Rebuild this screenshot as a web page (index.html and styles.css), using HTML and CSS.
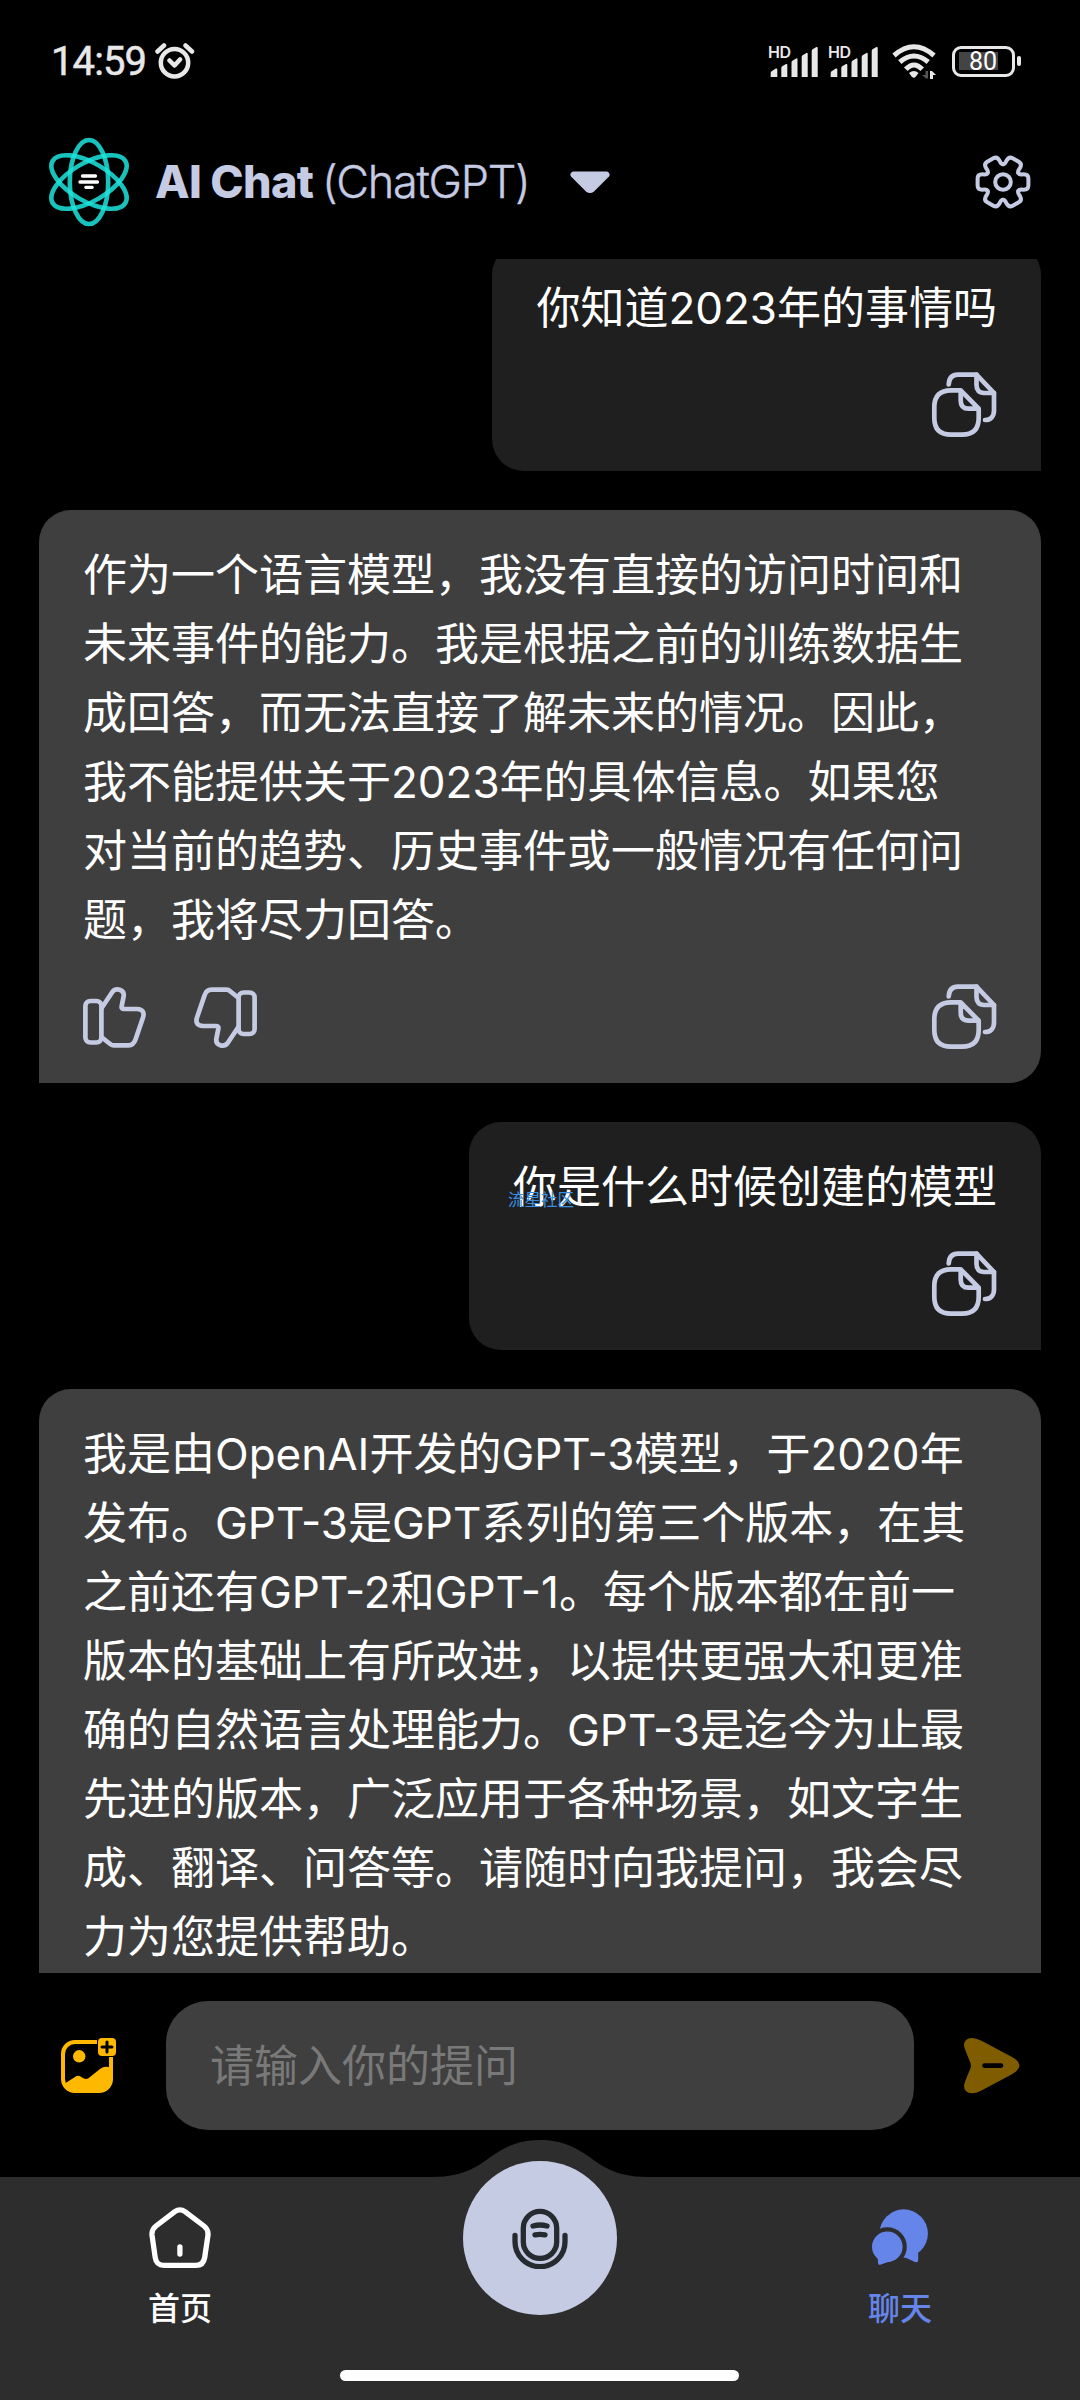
FILE: index.html
```html
<!DOCTYPE html>
<html lang="zh-CN">
<head>
<meta charset="utf-8">
<title>AI Chat</title>
<link rel="stylesheet" href="styles.css">
</head>
<body>
<svg class="defs" width="0" height="0" aria-hidden="true">
  <symbol id="copy" viewBox="0 0 66 66">
    <path d="M17.7 12.5C18 6.500 20.500 2.700 27 2.700H45.500L63 21V38.500C63 44.500 59.500 48 54 48"/>
    <path d="M45.500 2.700V13Q45.500 21 53 21H63"/>
    <path d="M29.700 18.300H20Q3.300 18.300 3.300 35V46Q3.300 62.700 20 62.700H31Q47.700 62.700 47.700 46V36.700ZV28.500Q29.700 36.700 37.500 36.700H47.700"/>
  </symbol>
  <symbol id="thumb" viewBox="0 0 63 61">
    <rect x="2.400" y="14" width="16" height="41.500" rx="5"/>
    <path d="M19 20.500L29.500 4.800C33 .5 41.500 2.500 40.700 9L38.600 19.500Q38.300 22 41 22H54Q62.500 22.500 60 30.500L52.500 52.500Q50.500 58.300 45.500 58.300H30.500Q28.500 58.300 26.500 56.500L19 50.500"/>
  </symbol>
  <symbol id="signal" viewBox="0 0 50 33">
    <path d="M2.700 32V28Q2.700 26.500 4 26L7.800 23.600Q9.300 23 9.300 24.500V32ZM13.300 32V23Q13.300 21.500 14.600 21L18 19Q19.300 18.500 19.300 20V32ZM23.500 32V17.500Q23.500 16 24.800 15.400L28.200 13.400Q29.500 13 29.500 14.500V32ZM33.700 32V12Q33.700 10.500 35 9.900L38.400 7.900Q39.700 7.500 39.700 9V32ZM43.700 32V6Q43.700 4.500 45 4L48.400 2Q49.700 1.500 49.700 3V32Z"/>
  </symbol>
</svg>

<header class="status">
  <span class="time">14:59</span>
  <svg class="alarm" viewBox="0 0 40 38"><circle cx="19.500" cy="20.700" r="13.700"/><path d="M2.500 9.500L9 3.500M30.500 3.500L37 9.500M14.500 18.500L19.500 23.500L25 17.500"/></svg>
  <div class="system">
    <div class="sim"><span class="hd">HD</span><svg viewBox="0 0 50 33"><use href="#signal"/></svg></div>
    <div class="sim"><span class="hd">HD</span><svg viewBox="0 0 50 33"><use href="#signal"/></svg></div>
    <svg class="wifi" viewBox="0 0 48 36">
      <path class="wave" d="M4 11.500Q24 -6 44 11.500M9.800 18Q24 6 38.200 18M15.800 25.300Q24 16.500 32.200 25.300"/>
      <path fill="#e8e8e8" d="M19 29Q24 25 28.500 29L25.500 33Q24 34.500 22 33Z"/>
      <path fill="#555" d="M35.500 27H38V34.500H36L32 31H35.500Z"/>
      <path fill="#e8e8e8" d="M40 27H42L46 31H43V35H40Z"/>
    </svg>
    <div class="battery"><span>80</span></div>
  </div>
</header>

<div class="titlebar">
  <svg class="logo" viewBox="-41 -45 82 90">
    <ellipse rx="19.200" ry="42"/><ellipse rx="19.200" ry="42" transform="rotate(60)"/><ellipse rx="19.200" ry="42" transform="rotate(-60)"/>
    <path d="M-6.500 -6H6.500M-9 0H8.500M-3.200 5.300H3.200"/>
  </svg>
  <h1 class="title"><b>AI Chat</b><span>(ChatGPT)</span></h1>
  <svg class="caret" viewBox="0 0 42 24"><path d="M4 1.500H38Q42 3 40 6.500L25 21.500Q21 24.500 17 21.500L2 6.500Q0 3 4 1.500Z"/></svg>
  <svg class="gear" viewBox="-28 -28 56 56">
    <path id="tooth" d="M15.400 -8.900C16.600 -6.900 18 -7.700 20.500 -7.700Q25.400 -7.700 25.400 -3.500V3.500Q25.400 7.700 20.500 7.700C18 7.700 16.600 6.900 15.400 8.900"/>
    <use href="#tooth" transform="rotate(60)"/><use href="#tooth" transform="rotate(120)"/><use href="#tooth" transform="rotate(180)"/><use href="#tooth" transform="rotate(240)"/><use href="#tooth" transform="rotate(300)"/>
    <circle r="7.800"/>
  </svg>
</div>

<main class="chat">
  <section class="bubble user">
    <p>你知道<span class="num">2023</span>年的事情吗</p>
    <div class="actions"><svg class="icon copy"><use href="#copy"/></svg></div>
  </section>
  <section class="bubble bot">
    <p>作为一个语言模型，我没有直接的访问时间和<br>未来事件的能力。我是根据之前的训练数据生<br>成回答，而无法直接了解未来的情况。因此，<br>我不能提供关于<span class="num">2023</span>年的具体信息。如果您<br>对当前的趋势、历史事件或一般情况有任何问<br>题，我将尽力回答。</p>
    <div class="actions">
      <svg class="icon thumb"><use href="#thumb"/></svg>
      <svg class="icon thumb down"><use href="#thumb"/></svg>
      <svg class="icon copy"><use href="#copy"/></svg>
    </div>
  </section>
  <section class="bubble user">
    <p>你是什么时候创建的模型</p>
    <span class="stamp">流星社区</span>
    <div class="actions"><svg class="icon copy"><use href="#copy"/></svg></div>
  </section>
  <section class="bubble bot">
    <p>我是由<span class="lat">OpenAI</span>开发的<span class="lat">GPT-3</span>模型，于<span class="num">2020</span>年<br>发布。<span class="lat">GPT-3</span>是<span class="lat">GPT</span>系列的第三个版本，在其<br>之前还有<span class="lat">GPT-2</span>和<span class="lat">GPT-1</span>。每个版本都在前一<br>版本的基础上有所改进，以提供更强大和更准<br>确的自然语言处理能力。<span class="lat">GPT-3</span>是迄今为止最<br>先进的版本，广泛应用于各种场景，如文字生<br>成、翻译、问答等。请随时向我提问，我会尽<br>力为您提供帮助。</p>
    <div class="actions">
      <svg class="icon thumb"><use href="#thumb"/></svg>
      <svg class="icon thumb down"><use href="#thumb"/></svg>
      <svg class="icon copy"><use href="#copy"/></svg>
    </div>
  </section>
</main>

<div class="composer">
  <svg class="picture" viewBox="0 0 56 56">
    <rect x="2" y="4" width="48" height="49" rx="12" fill="none" stroke="#ffb800" stroke-width="4"/>
    <circle cx="18.200" cy="18.300" r="6.200"/>
    <path d="M3 46L14 39Q17.500 36.500 21 39.500Q25.500 42.500 29 39L39 31Q44 27 50 30V43Q50 54 38 54H14Q3 54 3 46Z"/>
    <rect x="36" y="-1" width="20" height="20" rx="4" fill="#000"/>
    <rect x="37" y="0" width="18" height="18" rx="4"/>
    <path d="M46 4V14M41 9H51" stroke="#000" stroke-width="3" stroke-linecap="round"/>
  </svg>
  <div class="field">请输入你的提问</div>
  <svg class="send" viewBox="0 0 56 56"><path d="M0 8Q0 0 8 0Q12 0 17 2.500L48 19Q55.500 23 55.500 27.600Q55.500 32 48 36.200L17 52.700Q12 55.200 8 55.200Q0 55.200 0 47.200Q1 43 6.200 31Q7.600 27.600 6.200 24.200Q1 12 0 8Z"/><path d="M20.500 27.600H37" stroke="#000" stroke-width="4.700" stroke-linecap="round"/></svg>
</div>

<nav class="tabs">
  <svg class="hump" viewBox="0 0 216 38"><path d="M0 38V37C35 37 48 24 60 16S85 0 108 0S144 8 156 16S181 37 216 37V38Z"/></svg>
  <a class="tab">
    <svg class="home" viewBox="0 0 63 62"><path d="M25.800 4.700Q30.900 1 36 4.700L55 19Q59.500 22.500 59 28L55.700 50.500Q54.500 58.300 47 58.300H15Q7.300 58.300 6.200 50.500L3 28Q2.500 22.500 7 19ZM30.900 39.800V47"/></svg>
    <span>首页</span>
  </a>
  <a class="mic">
    <svg viewBox="0 0 56 61"><rect x="11.300" y="3.400" width="33.400" height="47" rx="16.700"/><path d="M3 27.500V33.700A25 25 0 0 0 53 33.700V27.500M21 18Q28 16 35 18M23 26.800Q28 26 33 26.800"/></svg>
  </a>
  <a class="tab active">
    <svg class="talk" viewBox="0 0 60 62"><circle cx="33.700" cy="26.500" r="24.200"/><path d="M32 49L45 55Q48.200 56 48.200 53L48.200 44L50 40Z"/><circle cx="17.300" cy="39.700" r="19.500" fill="#2d2d2d"/><path fill="#2d2d2d" d="M4 44L7 60L30 52L34 49Z"/><circle cx="17.300" cy="39.700" r="15.300"/><path d="M6 48Q8.200 51 8 56Q8.300 58.700 11 57.500L18 54.900L24 53Z"/></svg>
    <span>聊天</span>
  </a>
  <div class="gesture"></div>
</nav>
</body>
</html>
```
FILE: styles.css
```css
* { box-sizing: border-box; }
body {
  margin: 0;
  width: 1080px;
  height: 2400px;
  display: flex;
  flex-direction: column;
  overflow: hidden;
  background: #000;
  color: #fff;
  font-family: "Noto Sans CJK SC", sans-serif;
}
svg { display: block; flex: none; }
.defs { position: absolute; }

.status {
  height: 122px;
  padding: 0 59px 0 51px;
  display: flex;
  align-items: center;
  color: #e8e8e8;
}
.time {
  width: 104px;
  padding-top: 2px;
  font: 400 40px/40px Roboto, sans-serif;
  letter-spacing: -.9px;
  -webkit-text-stroke: .5px #e8e8e8;
}
.alarm {
  width: 40px;
  height: 38px;
  fill: none;
  stroke: #e8e8e8;
  stroke-width: 4.5;
  stroke-linecap: round;
  stroke-linejoin: round;
}
.system { margin-left: auto; display: flex; align-items: center; }
.sim { position: relative; width: 50px; height: 33px; margin-right: 10px; }
.sim svg { width: 50px; height: 33px; fill: #e8e8e8; }
.hd {
  position: absolute;
  left: 0;
  top: -1px;
  font: 600 16px/17px Inter, sans-serif;
  letter-spacing: -.5px;
}
.wifi { width: 48px; height: 36px; margin: 1px 14px 0 2px; }
.wave { fill: none; stroke: #e8e8e8; stroke-width: 5; }
.battery {
  position: relative;
  width: 63px;
  height: 31px;
  margin-right: 6px;
  padding: 3px 4px;
  border: 3.500px solid #e8e8e8;
  border-radius: 9px;
}
.battery::after {
  content: "";
  position: absolute;
  left: 62px;
  top: 7px;
  width: 4px;
  height: 10px;
  border-radius: 2px;
  background: #e8e8e8;
}
.battery span {
  display: block;
  width: 39px;
  height: 18px;
  padding-left: 10px;
  background: #444;
  color: #fff;
  font: 400 25px/19px Roboto, sans-serif;
}

.titlebar {
  height: 137px;
  padding: 15px 49px 0 48px;
  display: flex;
  align-items: flex-start;
}
.logo { width: 82px; height: 90px; }
.logo ellipse { fill: none; stroke: #1de3dc; stroke-width: 4.600; stroke-opacity: .86; }
.logo path { stroke: #fff; stroke-width: 3.300; stroke-linecap: round; }
.title {
  margin: 0 0 0 25px;
  padding-top: 18px;
  width: 414px;
  display: flex;
  color: #c5cbe2;
  font: 300 45px/54px Inter, sans-serif;
  white-space: nowrap;
}
.title b { width: 167px; font-weight: 800; letter-spacing: -.700px; }
.title span { letter-spacing: -1.300px; -webkit-text-stroke: .4px #c5cbe2; }
.caret { width: 42px; height: 24px; margin-top: 33px; fill: #c5cbe2; }
.gear {
  width: 56px;
  height: 56px;
  margin: 17px 0 0 auto;
  fill: none;
  stroke: #c5cbe2;
  stroke-width: 4;
  stroke-linecap: round;
}

.chat {
  height: 1714px;
  padding: 0 39px;
  display: flex;
  flex-direction: column;
  gap: 39px;
  overflow: hidden;
}
.bubble {
  position: relative;
  flex: none;
  padding: 28px 44px 33px 44px;
  border-radius: 32px;
}
.bubble p {
  margin: 0;
  font-size: 44px;
  line-height: 69px;
  white-space: nowrap;
}
.user { align-self: flex-end; background: #1f1f1f; border-bottom-right-radius: 0; }
.user:first-child { margin-top: -16px; }
.bot { background: #3f3f3f; border-bottom-left-radius: 0; }
.num, .lat { font-family: Inter, sans-serif; line-height: 1; }
.actions { margin-top: 32px; height: 66px; display: flex; align-items: center; gap: 48px; }
.icon { fill: none; stroke: #c5cbe2; stroke-width: 4.700; stroke-linejoin: round; stroke-linecap: round; }
.copy { width: 66px; height: 66px; margin-left: auto; }
.thumb { width: 63px; height: 61px; }
.down { transform: rotate(180deg); }
.stamp {
  position: absolute;
  left: 39px;
  top: 67px;
  color: #3a8fe0;
  font-size: 16.500px;
  line-height: 20px;
}

.composer {
  height: 204px;
  padding: 28px 60px 0 61px;
  display: flex;
  align-items: flex-start;
}
.picture { width: 56px; height: 56px; margin-top: 37px; fill: #ffb800; overflow: visible; }
.field {
  width: 748px;
  height: 129px;
  margin-left: 49px;
  padding-left: 44px;
  border-radius: 42px;
  background: #3f3f3f;
  color: #797979;
  font-size: 44px;
  line-height: 125px;
}
.send { width: 56px; height: 56px; margin: 37px 0 0 auto; fill: #805c00; }

.tabs {
  position: relative;
  flex: 1;
  display: flex;
  justify-content: space-between;
  background: #2d2d2d;
}
.hump { position: absolute; left: 432px; top: -37px; width: 216px; height: 38px; fill: #2d2d2d; }
.tab {
  width: 360px;
  padding-top: 30px;
  display: flex;
  flex-direction: column;
  align-items: center;
  font-size: 32px;
  font-weight: 500;
  line-height: 40px;
}
.tab svg { height: 62px; margin-bottom: 17px; }
.active { color: #6585ea; }
.home { width: 63px; fill: none; stroke: #fff; stroke-width: 5.300; stroke-linecap: round; }
.talk { width: 60px; fill: #6585ea; }
.mic {
  position: relative;
  width: 154px;
  height: 154px;
  margin-top: -16px;
  border-radius: 50%;
  display: flex;
  align-items: center;
  justify-content: center;
  background: #c5cbe2;
}
.mic svg { width: 56px; height: 61px; fill: none; stroke: #262b30; stroke-width: 5.300; stroke-linecap: round; }
.gesture {
  position: absolute;
  left: 340px;
  bottom: 19px;
  width: 399px;
  height: 11px;
  border-radius: 6px;
  background: #fff;
}
```
